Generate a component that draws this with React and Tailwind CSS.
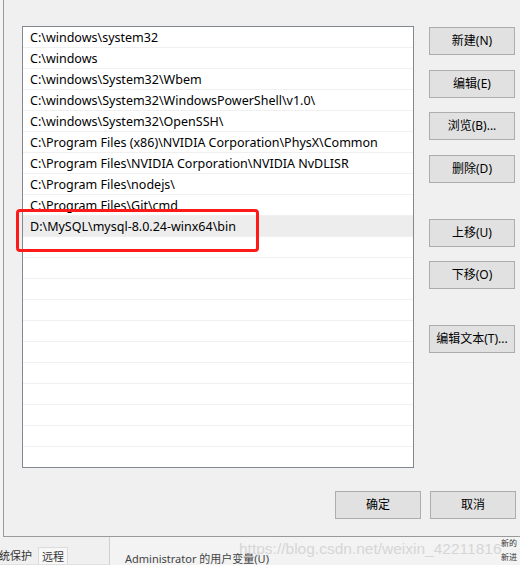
import React from "react";

const paths = [
  "C:\\windows\\system32",
  "C:\\windows",
  "C:\\windows\\System32\\Wbem",
  "C:\\windows\\System32\\WindowsPowerShell\\v1.0\\",
  "C:\\windows\\System32\\OpenSSH\\",
  "C:\\Program Files (x86)\\NVIDIA Corporation\\PhysX\\Common",
  "C:\\Program Files\\NVIDIA Corporation\\NVIDIA NvDLISR",
  "C:\\Program Files\\nodejs\\",
  "C:\\Program Files\\Git\\cmd",
  "D:\\MySQL\\mysql-8.0.24-winx64\\bin",
];

const rows = [...paths, ...Array(11).fill("")];

const font = { fontFamily: '"Noto Sans", "Noto Sans CJK SC", sans-serif' };

const WinButton = ({ label, className = "" }) => (
  <button
    className={`w-[86px] h-[28px] bg-[#e1e1e1] border border-[#adadad] text-[12px] text-black flex items-center justify-center ${className}`}
  >
    {label}
  </button>
);

const App = () => {
  return (
    <div
      className="relative w-[520px] h-[565px] overflow-hidden bg-[#f0f0f0] text-black"
      style={font}
    >
      <div className="flex flex-col h-[565px]">
        <div className="flex h-[537px]">
          {/* window behind, left sliver */}
          <div className="w-[4px] bg-[#f3f3f3] border-r border-[#9a9a9a]"></div>

          {/* the dialog */}
          <div className="flex-1 flex flex-col bg-[#f0f0f0] border-b border-[#9a9a9a]">
            <div className="flex">
              <div className="ml-[18px] mt-[26px] w-[392px] h-[442px] border border-[#828790] bg-white overflow-hidden">
                {rows.map((p, i) => (
                  <div
                    key={i}
                    className={`h-[21px] shrink-0 border-b border-[#f0f0f0] pl-[7px] pt-[3px] flex items-center text-[12.5px] whitespace-nowrap ${
                      i === 9 ? "bg-[#ededed]" : ""
                    }`}
                  >
                    {p}
                  </div>
                ))}
              </div>

              <div className="ml-[15px] mt-[27px] flex flex-col">
                <WinButton label="新建(N)" />
                <WinButton label="编辑(E)" className="mt-[15px]" />
                <WinButton label="浏览(B)..." className="mt-[14px]" />
                <WinButton label="删除(D)" className="mt-[15px]" />
                <WinButton label="上移(U)" className="mt-[36px]" />
                <WinButton label="下移(O)" className="mt-[14px]" />
                <WinButton label="编辑文本(T)..." className="mt-[36px]" />
              </div>
            </div>

            <div className="flex justify-end gap-[9px] mt-[23px] pr-[4px]">
              <WinButton label="确定" />
              <WinButton label="取消" />
            </div>
          </div>
        </div>

        {/* window behind, bottom strip */}
        <div className="flex flex-1">
          <div className="w-[110px] bg-[#f0f0f0] border-r border-[#d0d0d0] flex items-end">
            <div className="flex text-[11px] text-[#333] h-[18px] w-full border-b border-[#e0e0e0]">
              <span className="px-[1px] -ml-[2px] leading-[18px]">统保护</span>
              <span className="ml-[5px] px-[3px] leading-[18px] bg-[#f7f7f7] border border-[#dcdcdc] border-b-0">
                远程
              </span>
            </div>
          </div>
          <div className="flex-1 bg-[#f3f3f3] relative">
            <span className="absolute left-[15px] top-[14px] text-[11px] text-[#444]">
              Administrator 的用户变量(U)
            </span>
            <div className="absolute left-[391px] top-[1px] flex flex-col gap-[4px] text-[8px] leading-[10px] text-[#333] whitespace-nowrap">
              <span>新的</span>
              <span>新进</span>
            </div>
          </div>
        </div>
      </div>

      {/* red highlight */}
      <div className="absolute left-[16px] top-[209px] w-[243px] h-[43px] border-[3px] border-[#ff1a1a] rounded-[4px]"></div>

      {/* watermark */}
      <div
        className="absolute left-[239px] top-[539px] text-[15.5px] leading-[20px] text-[#d6d6d6] whitespace-nowrap"
        style={{ fontFamily: '"Liberation Sans", Arial, sans-serif' }}
      >
        https://blog.csdn.net/weixin_42211816
      </div>
    </div>
  );
};

export default App;
